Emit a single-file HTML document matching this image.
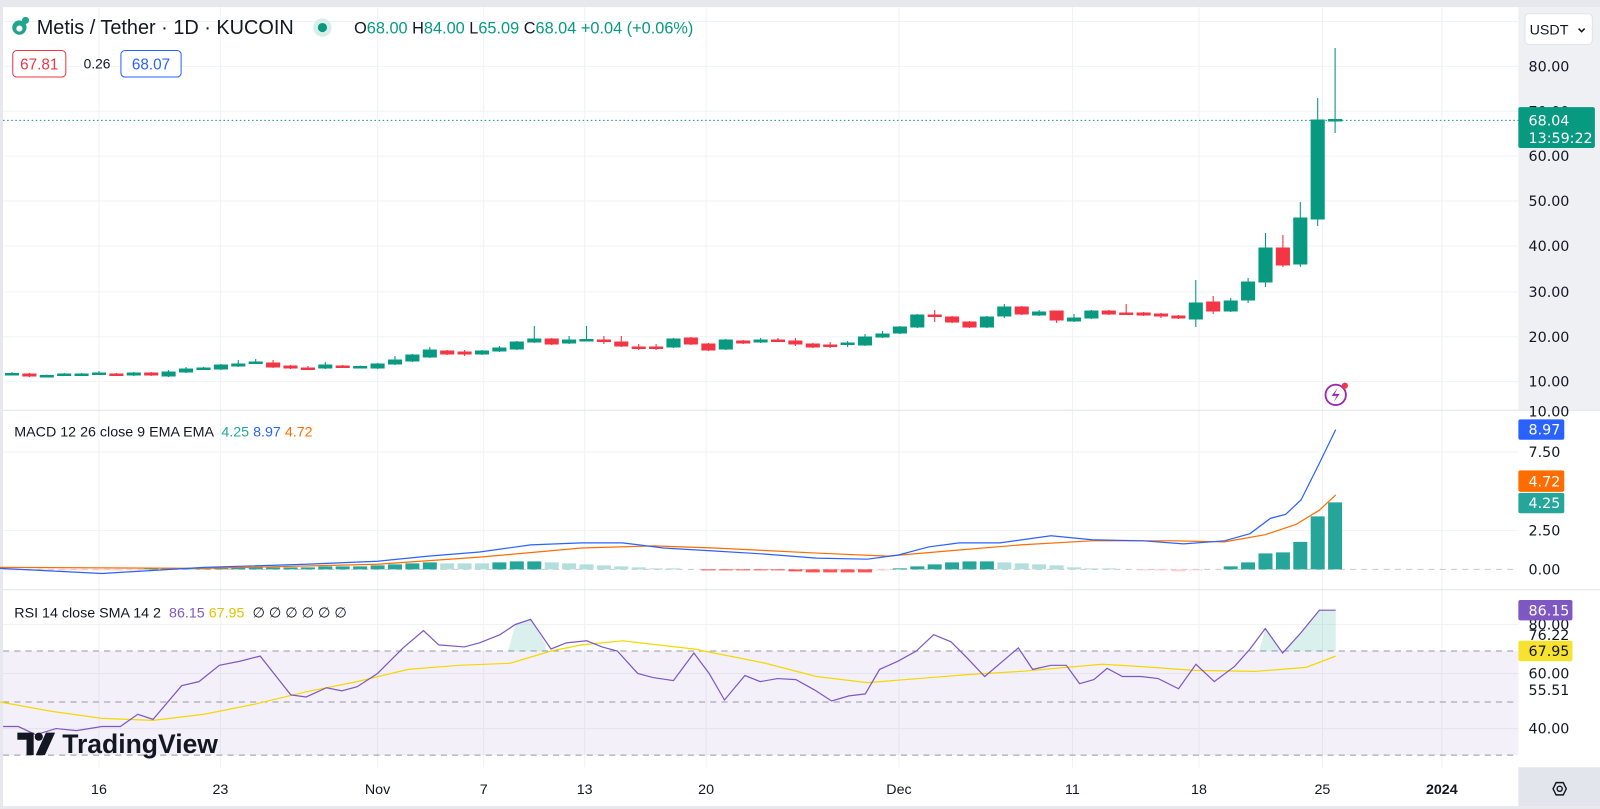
<!DOCTYPE html>
<html><head><meta charset="utf-8"><style>
html,body{margin:0;padding:0;width:1600px;height:809px;overflow:hidden;background:#e6e8ed}
svg{display:block;font-family:"Liberation Sans","DejaVu Sans",sans-serif}
</style></head><body>
<svg width="1600" height="809" viewBox="0 0 1600 809" xmlns="http://www.w3.org/2000/svg">
<g transform="scale(1.0204)">
<rect x="3" y="7" width="1565" height="783" fill="#fff"/>
<rect x="1488" y="7" width="80" height="395" fill="#eff0f4"/>
<rect x="1488" y="752" width="80" height="38" fill="#e3e5ec"/>
<g stroke="#f0f2f6" stroke-width="1">
<line x1="3" y1="21" x2="1488" y2="21"/><line x1="3" y1="65" x2="1488" y2="65"/><line x1="3" y1="109" x2="1488" y2="109"/><line x1="3" y1="153" x2="1488" y2="153"/><line x1="3" y1="197" x2="1488" y2="197"/><line x1="3" y1="241" x2="1488" y2="241"/><line x1="3" y1="286" x2="1488" y2="286"/><line x1="3" y1="330" x2="1488" y2="330"/><line x1="3" y1="374" x2="1488" y2="374"/>
<line x1="3" y1="443" x2="1488" y2="443"/><line x1="3" y1="520" x2="1488" y2="520"/>
<line x1="3" y1="612" x2="1488" y2="612"/><line x1="3" y1="660" x2="1488" y2="660"/><line x1="3" y1="714" x2="1488" y2="714"/>
<line x1="97" y1="7" x2="97" y2="752"/><line x1="216" y1="7" x2="216" y2="752"/><line x1="370" y1="7" x2="370" y2="752"/><line x1="474" y1="7" x2="474" y2="752"/><line x1="573" y1="7" x2="573" y2="752"/><line x1="692" y1="7" x2="692" y2="752"/><line x1="881" y1="7" x2="881" y2="752"/><line x1="1051" y1="7" x2="1051" y2="752"/><line x1="1175" y1="7" x2="1175" y2="752"/><line x1="1296" y1="7" x2="1296" y2="752"/><line x1="1413" y1="7" x2="1413" y2="752"/>
</g>
<rect x="3" y="638" width="1485" height="102" fill="#7e57c2" fill-opacity="0.09"/>
<g stroke="#9598a1" stroke-dasharray="6,5" stroke-width="1">
<line x1="3" y1="638" x2="1488" y2="638"/><line x1="3" y1="688" x2="1488" y2="688"/><line x1="3" y1="740" x2="1488" y2="740"/><line x1="3" y1="558" x2="1488" y2="558" stroke="#c8cad0"/>
</g>
<line x1="3" y1="402" x2="1568" y2="402" stroke="#e0e3eb"/>
<line x1="3" y1="578" x2="1568" y2="578" stroke="#e0e3eb"/>
<line x1="3" y1="118" x2="1488" y2="118" stroke="#089981" stroke-dasharray="1.5,2.5"/>
</g>
<path fill="#089981" stroke="#089981" stroke-width="1.1" d="M12 372V375M5.5 373.5h13v1.5h-13zM46.8 374.5V377M40.3 375.5h13v1.5h-13zM64.2 373V376M57.7 374h13v1.5h-13zM81.6 373V376M75.1 374h13v1.5h-13zM99 371V375M92.5 373h13v1.5h-13zM133.8 372V376M127.3 373h13v2h-13zM168.6 370V377M162.1 372h13v4h-13zM186.1 367V373M179.6 369h13v3h-13zM203.5 367V370M197 368h13v1.5h-13zM220.9 364V370M214.4 365h13v4h-13zM238.3 360V367M231.8 364h13v2h-13zM255.7 359V364M249.2 362h13v1.5h-13zM325.3 362V369M318.8 365h13v3h-13zM360.2 365.5V368M353.7 366.5h13v1.5h-13zM377.6 363V369M371.1 364h13v4h-13zM395 356V365M388.5 360h13v4h-13zM412.4 354V362M405.9 355h13v6h-13zM429.8 347V358M423.3 350h13v7h-13zM482 350V355M475.5 351h13v3h-13zM499.4 346V352M492.9 348h13v3h-13zM516.8 341V350M510.3 342h13v7h-13zM534.3 326V343M527.8 339h13v3h-13zM569.1 336V344M562.6 340h13v3h-13zM586.5 326V341M580 339.5h13v1.5h-13zM673.5 338V348M667 339h13v8h-13zM725.8 339V350M719.3 340h13v9h-13zM760.6 338V343M754.1 340h13v2h-13zM847.6 341V347M841.1 343h13v1.5h-13zM865 334V346M858.5 337h13v8h-13zM882.5 331V338M876 334h13v3h-13zM899.9 326V334M893.4 327h13v6h-13zM917.3 314V328M910.8 315h13v12h-13zM986.9 316V328M980.4 317h13v10h-13zM1004.3 304V318M997.8 307h13v9h-13zM1039.1 310V316M1032.6 312h13v3h-13zM1074 314V322M1067.5 318h13v3h-13zM1091.4 310V319M1084.9 311h13v7h-13zM1195.8 280V327M1189.3 303h13v16h-13zM1230.7 298V312M1224.2 301h13v10h-13zM1248.1 278V303M1241.6 282h13v18h-13zM1265.5 233V287M1259 248h13v34h-13zM1300.3 202V267M1293.8 218h13v46h-13zM1317.7 98V226M1311.2 120h13v99h-13zM1335.1 48V133M1328.6 119.5h13v1.5h-13z"/>
<path fill="#f23645" stroke="#f23645" stroke-width="1.1" d="M29.4 373V377M22.9 374h13v2h-13zM116.4 373V376M109.9 374h13v1.5h-13zM151.2 372V376M144.7 373h13v2h-13zM273.1 360V368M266.6 363h13v4h-13zM290.5 365V369M284 366h13v2h-13zM307.9 366V370M301.4 368h13v1.5h-13zM342.7 365V368M336.2 366h13v1.5h-13zM447.2 350V355M440.7 351h13v3h-13zM464.6 350V356M458.1 352h13v2h-13zM551.7 338V345M545.2 339h13v5h-13zM603.9 336V344M597.4 340h13v1.5h-13zM621.3 336V347M614.8 342h13v4h-13zM638.7 344V350M632.2 347h13v1.5h-13zM656.1 344V350M649.6 347h13v1.5h-13zM690.9 337V345M684.4 338h13v6h-13zM708.4 343V351M701.9 344h13v6h-13zM743.2 340V344M736.7 341h13v2h-13zM778 338V342M771.5 340h13v1.5h-13zM795.4 338V346M788.9 341h13v3h-13zM812.8 343V348M806.3 344h13v3h-13zM830.2 342V348M823.7 345h13v1.5h-13zM934.7 310V322M928.2 315h13v1.5h-13zM952.1 316V323M945.6 317h13v5h-13zM969.5 321V328M963 322h13v5h-13zM1021.7 306V315M1015.2 307h13v7h-13zM1056.6 311V323M1050.1 311h13v9h-13zM1108.8 310V315M1102.3 311h13v3h-13zM1126.2 304V315M1119.7 313h13v1.5h-13zM1143.6 312V316M1137.1 313h13v2h-13zM1161 313V318M1154.5 314h13v2h-13zM1178.4 315V319M1171.9 316h13v2h-13zM1213.2 296V314M1206.7 302h13v9h-13zM1282.9 235V267M1276.4 248h13v17h-13z"/>
<path fill="#26a69a" d="M144.2 569.4v-1h14v1zM161.6 569.4v-1h14v1zM179.1 569.4v-1h14v1zM196.5 569.4v-1h14v1zM213.9 569.4v-2h14v2zM231.3 569.4v-2h14v2zM248.7 569.4v-2h14v2zM266.1 569.4v-2h14v2zM283.5 569.4v-2h14v2zM300.9 569.4v-2h14v2zM318.3 569.4v-3h14v3zM335.7 569.4v-3h14v3zM353.2 569.4v-3h14v3zM370.6 569.4v-4h14v4zM388 569.4v-5h14v5zM405.4 569.4v-6h14v6zM422.8 569.4v-7h14v7zM492.4 569.4v-7h14v7zM509.8 569.4v-8h14v8zM527.3 569.4v-8h14v8zM892.9 569.4v-1h14v1zM910.3 569.4v-3h14v3zM927.7 569.4v-5h14v5zM945.1 569.4v-7h14v7zM962.5 569.4v-8h14v8zM979.9 569.4v-8h14v8zM1223.7 569.4v-3h14v3zM1241.1 569.4v-7h14v7zM1258.5 569.4v-16h14v16zM1275.9 569.4v-17h14v17zM1293.3 569.4v-27.5h14v27.5zM1310.7 569.4v-53h14v53zM1328.1 569.4v-67h14v67z"/>
<path fill="#b2dfdb" d="M440.2 569.4v-6h14v6zM457.6 569.4v-6h14v6zM475 569.4v-6h14v6zM544.7 569.4v-7h14v7zM562.1 569.4v-6h14v6zM579.5 569.4v-5h14v5zM596.9 569.4v-4h14v4zM614.3 569.4v-3h14v3zM631.7 569.4v-2h14v2zM649.1 569.4v-1h14v1zM666.5 569.4v-1h14v1zM997.3 569.4v-7h14v7zM1014.7 569.4v-6h14v6zM1032.1 569.4v-5h14v5zM1049.6 569.4v-4h14v4zM1067 569.4v-2h14v2zM1084.4 569.4v-1h14v1zM1101.8 569.4v-1h14v1z"/>
<path fill="#ff5252" d="M701.4 569.4v1h14v-1zM718.8 569.4v1h14v-1zM736.2 569.4v1h14v-1zM753.6 569.4v1h14v-1zM771 569.4v1h14v-1zM788.4 569.4v2h14v-2zM805.8 569.4v3h14v-3zM823.2 569.4v3h14v-3zM840.6 569.4v3h14v-3zM858 569.4v3h14v-3z"/>
<path fill="#ffcdd2" d="M5 569.4v1h14v-1zM22.4 569.4v1h14v-1zM39.8 569.4v1h14v-1zM57.2 569.4v1h14v-1zM74.6 569.4v1h14v-1zM92 569.4v1h14v-1zM109.4 569.4v1h14v-1zM126.8 569.4v1h14v-1zM875.5 569.4v1h14v-1zM1136.6 569.4v1h14v-1zM1154 569.4v1h14v-1zM1171.4 569.4v2h14v-2zM1188.8 569.4v1h14v-1z"/>
<g transform="scale(1.0204)">
<polyline fill="none" stroke="#ff6d00" stroke-width="1.2" points="0,556 200,557 370,553 470,546 570,537 640,535 700,537 800,542 870,545 940,539 1000,534 1070,530 1150,530 1200,531 1240,524 1270,514 1293,500 1309,485"/>
<polyline fill="none" stroke="#2962ff" stroke-width="1.2" points="0,557 100,562 200,556 300,553 370,550 420,545 470,541 520,534 570,532 610,532 650,537 700,540 750,543 800,547 850,548 880,544 910,536 940,532 980,532 1030,525 1070,529 1120,530 1160,533 1200,530 1225,523 1245,508 1260,504 1275,490 1293,454 1309,421"/>
<path d="M1240,616 L1257,640 L1275,620 L1293,598 L1309,598 L1309,638 L1234,638 Z" fill="#089981" fill-opacity="0.15"/>
<path d="M505,612 L520,607 L535,632 L535,638 L498,638 Z" fill="#089981" fill-opacity="0.15"/>
<polyline fill="none" stroke="#f5d800" stroke-width="1.2" points="0,688 50,697 100,704 150,706 200,700 250,690 300,678 350,668 400,656 450,652 500,650 540,638 570,632 610,628 680,636 750,650 800,663 850,669 900,665 950,661 1000,658 1080,651 1130,654 1170,657 1230,658 1280,654 1309,643"/>
<polyline fill="none" stroke="#7e57c2" stroke-width="1.2" points="3,712 18,712 35,720 55,714 75,716 100,712 118,712 135,700 150,705 178,672 195,668 215,652 235,648 255,643 270,662 285,681 300,683 320,674 335,677 350,673 370,660 395,635 415,618 430,632 455,634 470,630 490,622 505,612 520,607 540,636 555,630 575,628 590,634 605,638 625,660 640,664 660,667 680,640 695,660 710,686 730,662 745,668 762,665 780,666 798,676 815,687 832,682 848,680 862,656 880,648 898,638 915,622 932,629 948,645 965,663 985,646 998,635 1012,656 1030,652 1045,652 1058,670 1072,666 1085,655 1100,663 1118,663 1135,665 1155,675 1172,651 1190,668 1210,653 1225,636 1240,616 1257,640 1275,620 1293,598 1309,598"/>
<circle cx="19" cy="27" r="7" fill="#1fa58b"/><circle cx="19" cy="28" r="3" fill="#fff"/><circle cx="25" cy="20" r="3.5" fill="#1fa58b"/>
<text x="36" y="33.5" font-size="19.5" fill="#131722">Metis / Tether · 1D · KUCOIN</text>
<circle cx="316" cy="27" r="9" fill="#d7efe9"/><circle cx="316" cy="27" r="4.5" fill="#089981"/>
<text x="347" y="33" font-size="16" fill="#131722">O<tspan fill="#089981">68.00</tspan> H<tspan fill="#089981">84.00</tspan> L<tspan fill="#089981">65.09</tspan> C<tspan fill="#089981">68.04</tspan> <tspan fill="#089981">+0.04 (+0.06%)</tspan></text>
<rect x="12.5" y="49.5" width="52" height="26" rx="4" fill="#fff" stroke="#f23645"/>
<text x="38.5" y="68" font-size="15" fill="#f23645" text-anchor="middle">67.81</text>
<text x="82" y="67" font-size="13.5" fill="#131722">0.26</text>
<rect x="118.5" y="49.5" width="59" height="26" rx="4" fill="#fff" stroke="#2962ff"/>
<text x="148" y="68" font-size="15" fill="#2962ff" text-anchor="middle">68.07</text>
<text x="14" y="428" font-size="14" fill="#131722">MACD 12 26 close 9 EMA EMA <tspan fill="#26a69a" dx="4">4.25</tspan> <tspan fill="#2962ff">8.97</tspan> <tspan fill="#ff6d00">4.72</tspan></text>
<text x="14" y="605" font-size="14" fill="#131722">RSI 14 close SMA 14 2 <tspan fill="#7e57c2" dx="4">86.15</tspan> <tspan fill="#e3c300">67.95</tspan> <tspan dx="4">∅ ∅ ∅ ∅ ∅ ∅</tspan></text>
<path d="M17,718 H33 V740 H26 V725 H17 Z" fill="#131722"/><circle cx="38" cy="722" r="4" fill="#131722"/><path d="M45,718 H54 L44,740 H35 Z" fill="#131722"/>
<text x="61" y="738" font-size="26" font-weight="bold" fill="#131722">TradingView</text>
<circle cx="1309" cy="387" r="10" fill="none" stroke="#9c27b0" stroke-width="1.8"/><path d="M1311,380 L1305,388 H1310 L1307,394 L1313,386 H1308 Z" fill="#9c27b0"/><circle cx="1318" cy="378" r="3" fill="#f23645"/>
<rect x="1494.5" y="13.5" width="66" height="30" rx="4" fill="#fff" stroke="#e0e3eb"/>
<text x="1499" y="34" font-size="14" fill="#131722">USDT</text><path d="M1547,28 l3,3 l3,-3" fill="none" stroke="#131722" stroke-width="1.5"/>
<g font-size="14" fill="#131722" font-family="'DejaVu Sans','Liberation Sans',sans-serif">
<text x="1498" y="70">80.00</text><text x="1498" y="114">70.00</text><text x="1498" y="158">60.00</text><text x="1498" y="202">50.00</text><text x="1498" y="246">40.00</text><text x="1498" y="291">30.00</text><text x="1498" y="335">20.00</text><text x="1498" y="379">10.00</text><text x="1498" y="408">10.00</text>
<text x="1498" y="448">7.50</text><text x="1498" y="525">2.50</text><text x="1498" y="563">0.00</text>
<text x="1498" y="617">80.00</text><text x="1498" y="627">76.22</text><text x="1498" y="665">60.00</text><text x="1498" y="681">55.51</text><text x="1498" y="719">40.00</text>
</g>
<rect x="1488" y="105" width="75" height="40" rx="2" fill="#089981"/>
<g font-size="14" fill="#fff" font-family="'DejaVu Sans','Liberation Sans',sans-serif"><text x="1498" y="123">68.04</text><text x="1498" y="140">13:59:22</text></g>
<rect x="1488" y="411" width="45" height="20" rx="2" fill="#2962ff"/><text x="1498" y="426" font-size="14" fill="#fff" font-family="'DejaVu Sans',sans-serif">8.97</text>
<rect x="1488" y="461" width="45" height="21" rx="2" fill="#ff6d00"/><text x="1498" y="477" font-size="14" fill="#fff" font-family="'DejaVu Sans',sans-serif">4.72</text>
<rect x="1488" y="483" width="45" height="20" rx="2" fill="#26a69a"/><text x="1498" y="498" font-size="14" fill="#fff" font-family="'DejaVu Sans',sans-serif">4.25</text>
<rect x="1488" y="588" width="53" height="20" rx="2" fill="#7e57c2"/><text x="1498" y="603" font-size="14" fill="#fff" font-family="'DejaVu Sans',sans-serif">86.15</text>
<rect x="1488" y="628" width="53" height="20" rx="2" fill="#f7e32f"/><text x="1498" y="643" font-size="14" fill="#131722" font-family="'DejaVu Sans',sans-serif">67.95</text>
<g font-size="14" fill="#131722" text-anchor="middle">
<text x="97" y="778">16</text><text x="216" y="778">23</text><text x="370" y="778">Nov</text><text x="474" y="778">7</text><text x="573" y="778">13</text><text x="692" y="778">20</text><text x="881" y="778">Dec</text><text x="1051" y="778">11</text><text x="1175" y="778">18</text><text x="1296" y="778">25</text><text x="1413" y="778" font-weight="bold">2024</text>
</g>
<path d="M1522,773 l3,-6 h7 l3,6 l-3,6 h-7 z" fill="none" stroke="#131722" stroke-width="1.4"/><circle cx="1528.5" cy="773" r="2.5" fill="none" stroke="#131722" stroke-width="1.4"/>
</g>
</svg>
</body></html>
